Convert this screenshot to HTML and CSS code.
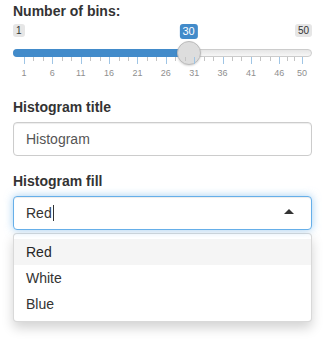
FILE: index.html
```html
<!DOCTYPE html>
<html lang="en">

<head>
    <meta charset="UTF-8">
    <meta name="viewport" content="width=device-width, initial-scale=1.0">
    <title>Histogram inputs</title>
    <link rel="stylesheet" href="styles.css">
</head>

<body>
    <div class="container">
        <!-- Slider -->
        <div class="form-group">
            <label class="control-label">Number of bins:</label>
            <div class="irs">
                <div class="irs-labels">
                    <span class="irs-min">1</span>
                    <span class="irs-max">50</span>
                </div>
                <div class="irs-line">
                    <div class="irs-bar" style="width: 176px"></div>
                </div>
                <div class="irs-track">
                    <span class="irs-single" style="left: 59.18%">30</span>
                    <span class="irs-handle" style="left: 59.18%"></span>
                    <div class="irs-grid" id="grid"></div>
                </div>
            </div>
        </div>

        <!-- Text input -->
        <div class="form-group">
            <label class="control-label" for="title">Histogram title</label>
            <input type="text" id="title" class="form-control" value="Histogram">
        </div>

        <!-- Select -->
        <div class="form-group">
            <label class="control-label">Histogram fill</label>
            <div class="selectize-control">
                <div class="selectize-input">
                    <span class="item">Red</span><span class="caret-cursor"></span>
                    <span class="arrow"></span>
                </div>
                <div class="selectize-dropdown">
                    <div class="option active">Red</div>
                    <div class="option">White</div>
                    <div class="option">Blue</div>
                </div>
            </div>
        </div>
    </div>

    <script>
        // Build the slider grid: a big tick every 5 values, two small ticks between
        const grid = document.getElementById("grid");
        const values = [1, 6, 11, 16, 21, 26, 31, 36, 41, 46, 50];
        const pct = v => ((v - 1) / 49 * 100);

        values.forEach((v, i) => {
            const tick = document.createElement("span");
            tick.className = "grid-pol";
            tick.style.left = pct(v) + "%";
            grid.appendChild(tick);

            const text = document.createElement("span");
            text.className = "grid-text";
            text.style.left = pct(v) + "%";
            text.textContent = v;
            grid.appendChild(text);

            if (i < values.length - 1) {
                const step = (pct(values[i + 1]) - pct(v)) / 3;
                for (let k = 1; k < 3; k++) {
                    const small = document.createElement("span");
                    small.className = "grid-pol small";
                    small.style.left = (pct(v) + step * k) + "%";
                    grid.appendChild(small);
                }
            }
        });
    </script>
</body>

</html>
```

FILE: styles.css
```css
body {
    font-family: "Liberation Sans", Arial, sans-serif;
    font-size: 14px;
    line-height: 20px;
    background-color: #fff;
    margin: 0;
    padding: 0;
    color: #333;
}

.container {
    width: 299px;
    padding: 1px 21px 20px 13px;
}

.form-group {
    margin-bottom: 15px;
}

.control-label {
    display: block;
    font-weight: bold;
    margin-bottom: 5px;
}

/* Range slider */
.irs {
    position: relative;
    margin-top: -2px;
    height: 58px;
}

.irs-labels {
    display: flex;
    justify-content: space-between;
    align-items: flex-start;
}

.irs-min,
.irs-max {
    font-size: 10px;
    line-height: 11px;
    padding: 1px 3px;
    background-color: #e6e6e6;
    color: #333;
    border-radius: 3px;
}

.irs-line {
    position: relative;
    margin-top: 12px;
    height: 6px;
    border: 1px solid #ccc;
    border-radius: 16px;
    background: linear-gradient(to bottom, #ddd -50%, #fff 150%);
}

.irs-bar {
    position: absolute;
    top: -1px;
    left: -1px;
    height: 8px;
    background-color: #428bca;
    border-radius: 16px 0 0 16px;
}

.irs-track {
    position: absolute;
    top: 0;
    left: 11px;
    right: 10px;
    bottom: 0;
}

.irs-single {
    position: absolute;
    top: 0;
    transform: translateX(-50%);
    font-size: 11px;
    line-height: 13px;
    padding: 1px 3px;
    background-color: #428bca;
    color: #fff;
    border-radius: 3px;
}

.irs-handle {
    position: absolute;
    top: 17px;
    width: 22px;
    height: 22px;
    margin-left: -12px;
    background-color: #ddd;
    border: 1px solid #bbb;
    border-radius: 50%;
    box-shadow: 0 1px 2px rgba(0, 0, 0, 0.15);
}

.irs-grid {
    position: absolute;
    top: 33px;
    left: 0;
    right: 0;
    height: 22px;
}

.grid-pol {
    position: absolute;
    top: 0;
    width: 1px;
    height: 7px;
    background-color: #9fc5e5;
}

.grid-pol.small {
    height: 4px;
    background-color: #c4c4c4;
}

.grid-text {
    position: absolute;
    top: 12px;
    transform: translateX(-50%);
    font-size: 9px;
    line-height: 9px;
    color: #8f8f8f;
    white-space: nowrap;
}

/* Text input */
.form-control {
    display: block;
    width: 100%;
    height: 34px;
    box-sizing: border-box;
    padding: 6px 12px;
    font-family: inherit;
    font-size: 14px;
    line-height: 20px;
    color: #555;
    background-color: #fff;
    border: 1px solid #ccc;
    border-radius: 4px;
    box-shadow: inset 0 1px 1px rgba(0, 0, 0, 0.075);
    margin: 0;
}

.form-group-tight {
    margin-bottom: 14px;
}

/* Select */
.selectize-input {
    position: relative;
    display: flex;
    align-items: center;
    height: 34px;
    box-sizing: border-box;
    padding: 6px 12px;
    color: #333;
    background-color: #fff;
    border: 1px solid #66afe9;
    border-radius: 4px;
    box-shadow: inset 0 1px 1px rgba(0, 0, 0, 0.075), 0 0 8px rgba(102, 175, 233, 0.6);
}

.caret-cursor {
    display: inline-block;
    width: 1px;
    height: 16px;
    margin-left: 1px;
    background-color: #333;
}

.arrow {
    position: absolute;
    right: 17px;
    top: 50%;
    margin-top: -4px;
    width: 0;
    height: 0;
    border-style: solid;
    border-width: 0 5px 5px 5px;
    border-color: transparent transparent #333 transparent;
}

/* Open dropdown list, sits right under the control */
.selectize-dropdown {
    margin-top: 3px;
    padding: 5px 0 4px;
    background-color: #fff;
    border: 1px solid rgba(0, 0, 0, 0.15);
    border-radius: 4px;
    box-shadow: 0 6px 12px rgba(0, 0, 0, 0.175);
}

.option {
    padding: 3px 12px;
    color: #333;
}

.option.active {
    background-color: #f5f5f5;
    color: #262626;
}
```
